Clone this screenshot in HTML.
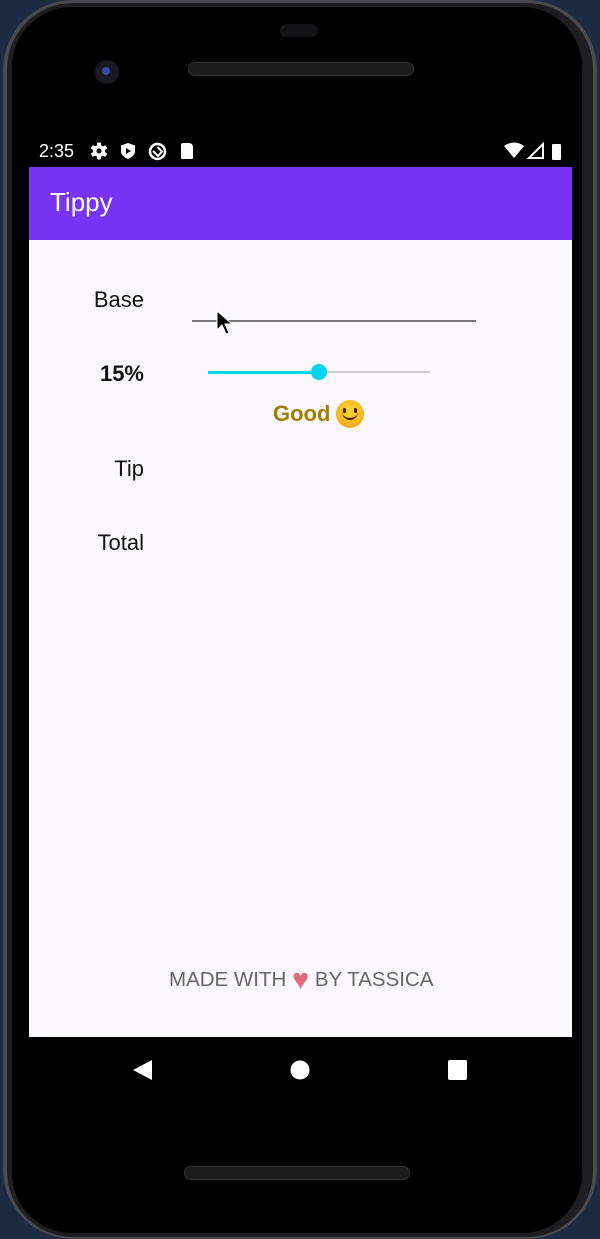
<!DOCTYPE html>
<html><head><meta charset="utf-8"><style>
*{margin:0;padding:0;box-sizing:border-box}
body{width:600px;height:1239px;overflow:hidden;background:#1c2a42;font-family:"Liberation Sans",sans-serif;position:relative}
.phone{position:absolute;left:3px;top:0;width:594px;height:1239px;background:#4a4a4e;border-radius:70px}
.phone2{position:absolute;left:7px;top:3px;width:586px;height:1234px;background:#1e1e20;border-radius:66px}
.inner{position:absolute;left:12px;top:7px;width:570px;height:1226px;background:#000;border-radius:60px}
.abs{position:absolute}
.screen{position:absolute;left:29px;top:240px;width:543px;height:797px;background:#fbf8fd}
.bar{position:absolute;left:29px;top:167px;width:543px;height:74px;background:#7633f3;border-bottom:1px solid #a87cf7}
.lbl{position:absolute;font-size:22px;color:#111;text-align:right;width:90px}
</style></head><body>
<div class="phone"></div>
<div class="phone2"></div>
<div class="inner"></div>
<div class="abs" style="left:280px;top:24px;width:38px;height:13px;border-radius:7px;background:#141416"></div>
<div class="abs" style="left:95px;top:60px;width:24px;height:24px;border-radius:50%;background:#1a1a22"></div>
<div class="abs" style="left:102px;top:67px;width:8px;height:8px;border-radius:50%;background:#3a4aa0"></div>
<div class="abs" style="left:188px;top:62px;width:226px;height:14px;border-radius:7px;background:#1c1c1c;border:1px solid #333"></div>
<div class="abs" style="left:184px;top:1166px;width:226px;height:14px;border-radius:7px;background:#1c1c1c;border:1px solid #333"></div>
<!-- status bar -->
<div class="abs" style="left:39px;top:141px;color:#fff;font-size:18px">2:35</div>
<svg class="abs" style="left:90px;top:142px" width="18" height="18" viewBox="0 0 18 18"><g fill="#fff"><circle cx="9" cy="9" r="6"/><rect x="7" y="0.5" width="4" height="17" rx="1"/><rect x="7" y="0.5" width="4" height="17" rx="1" transform="rotate(60 9 9)"/><rect x="7" y="0.5" width="4" height="17" rx="1" transform="rotate(120 9 9)"/></g><circle cx="9" cy="9" r="2.5" fill="#000"/></svg>
<svg class="abs" style="left:120px;top:142px" width="16" height="18"><path d="M8 1 L15 3.5 V9 Q15 14 8 17 Q1 14 1 9 V3.5Z" fill="#fff"/><path d="M6 6 L11 9 L6 12Z" fill="#000"/></svg>
<svg class="abs" style="left:148px;top:142px" width="19" height="19"><circle cx="9.5" cy="9.5" r="7.5" fill="none" stroke="#fff" stroke-width="2.5"/><path d="M5 9 L10 14 L14 9.5 L9.5 5" fill="none" stroke="#fff" stroke-width="2"/></svg>
<div class="abs" style="left:181px;top:143px;width:12px;height:16px;background:#fff;border-radius:2px 4px 1px 1px"></div>
<svg class="abs" style="left:502px;top:142px" width="64" height="18"><path d="M2 4 Q12 -3 22 4 L12 16Z" fill="#fff"/><path d="M41 2 V16 H27Z" fill="none" stroke="#fff" stroke-width="2"/><rect x="50" y="2" width="9" height="16" rx="1" fill="#fff"/></svg>
<div class="bar"></div>
<div class="abs" style="left:50px;top:187px;color:#fff;font-size:26px">Tippy</div>
<div class="screen"></div>
<div class="lbl" style="left:54px;top:287px">Base</div>
<div class="abs" style="left:192px;top:320px;width:284px;height:2px;background:#777"></div>
<svg class="abs" style="left:216px;top:310px" width="18" height="26"><path d="M1 1 V20 L6 15 L10 24 L13 23 L9 14 H16Z" fill="#000" stroke="#fff" stroke-width="1"/></svg>
<div class="lbl" style="left:54px;top:361px;font-weight:bold">15%</div>
<div class="abs" style="left:208px;top:371px;width:111px;height:3px;background:#00d4f5"></div>
<div class="abs" style="left:319px;top:371px;width:111px;height:2px;background:#ccc"></div>
<div class="abs" style="left:311px;top:364px;width:16px;height:16px;border-radius:50%;background:#00d4f5"></div>
<div class="abs" style="left:273px;top:401px;font-size:22px;font-weight:bold;color:#a07f00">Good</div>
<div class="abs" style="left:336px;top:400px;width:28px;height:28px;border-radius:50%;background:radial-gradient(circle at 50% 35%,#ffd43a,#f4a010)"></div>
<div class="abs" style="left:343px;top:408px;width:3px;height:5px;background:#402000;border-radius:2px"></div>
<div class="abs" style="left:354px;top:408px;width:3px;height:5px;background:#402000;border-radius:2px"></div>
<div class="abs" style="left:342px;top:412px;width:16px;height:8px;border-bottom:2px solid #402000;border-radius:0 0 8px 8px"></div>
<div class="lbl" style="left:54px;top:456px">Tip</div>
<div class="lbl" style="left:54px;top:530px">Total</div>
<div class="abs" style="left:169px;top:968px;font-size:20.5px;color:#666;white-space:nowrap">MADE WITH <span style="color:#e06c7a;font-size:29px;line-height:20px;vertical-align:-3px">♥</span> BY TASSICA</div>
<!-- nav -->
<svg class="abs" style="left:130px;top:1057px" width="340" height="26"><path d="M3 13 L22 3 V23Z" fill="#fff"/><circle cx="170" cy="13" r="9.5" fill="#fff"/><rect x="318" y="3" width="19" height="20" rx="2" fill="#fff"/></svg>
</body></html>
